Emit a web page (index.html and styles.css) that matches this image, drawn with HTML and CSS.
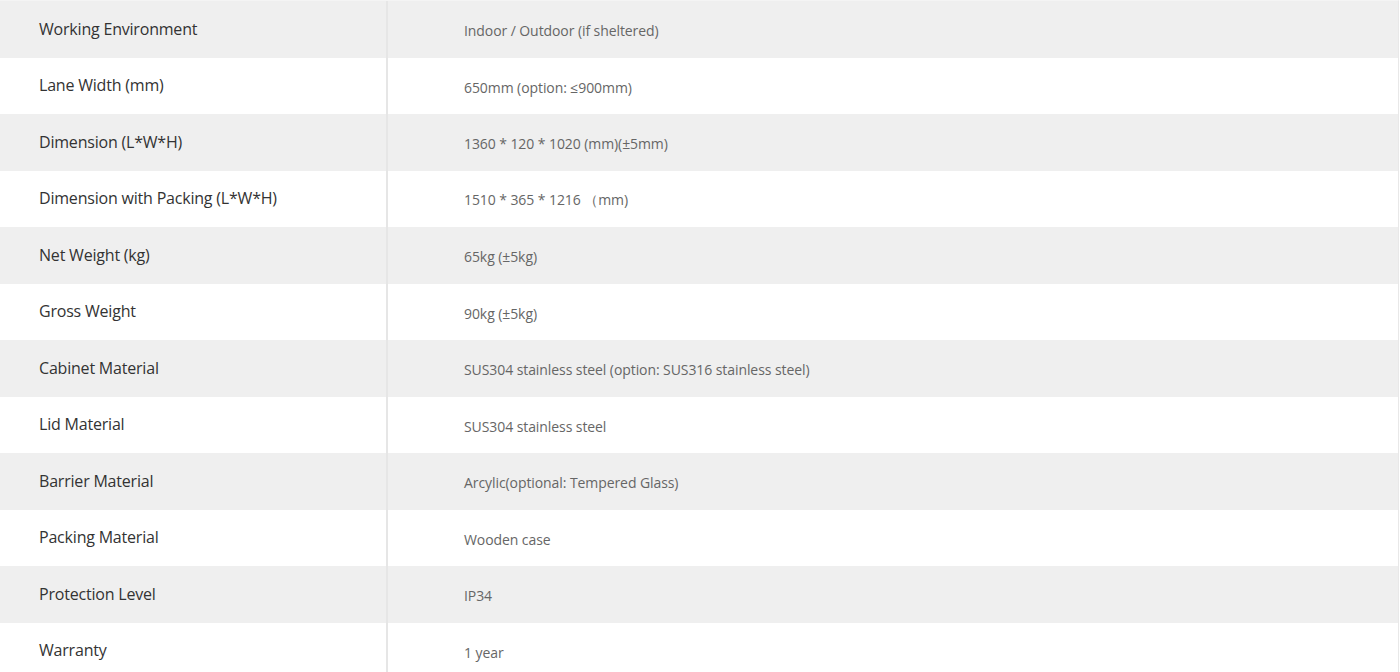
FILE: index.html
```html
<!DOCTYPE html>
<html lang="en">
<head>
<meta charset="utf-8">
<title>Specifications</title>
<link rel="stylesheet" href="styles.css">
</head>
<body>
<div class="spec">
  <div class="row alt"><div class="label">Working Environment</div><div class="value">Indoor / Outdoor (if sheltered)</div></div>
  <div class="row"><div class="label">Lane Width (mm)</div><div class="value">650mm (option: ≤900mm)</div></div>
  <div class="row alt"><div class="label">Dimension (L*W*H)</div><div class="value">1360 * 120 * 1020 (mm)(±5mm)</div></div>
  <div class="row"><div class="label">Dimension with Packing (L*W*H)</div><div class="value">1510 * 365 * 1216 （mm)</div></div>
  <div class="row alt"><div class="label">Net Weight (kg)</div><div class="value">65kg (±5kg)</div></div>
  <div class="row"><div class="label">Gross Weight</div><div class="value">90kg (±5kg)</div></div>
  <div class="row alt"><div class="label">Cabinet Material</div><div class="value">SUS304 stainless steel (option: SUS316 stainless steel)</div></div>
  <div class="row"><div class="label">Lid Material</div><div class="value">SUS304 stainless steel</div></div>
  <div class="row alt"><div class="label">Barrier Material</div><div class="value">Arcylic(optional: Tempered Glass)</div></div>
  <div class="row"><div class="label">Packing Material</div><div class="value">Wooden case</div></div>
  <div class="row alt"><div class="label">Protection Level</div><div class="value">IP34</div></div>
  <div class="row"><div class="label">Warranty</div><div class="value">1 year</div></div>
</div>
</body>
</html>
```
FILE: styles.css
```css
html, body {
  margin: 0;
  padding: 0;
  background: #ffffff;
}
body {
  font-family: "Open Sans", "Noto Sans", sans-serif;
  overflow: hidden;
}
.spec {
  width: 1398px;
  border-right: 1px solid #e8e8e8;
  border-top: 1px solid #f4f4f4;
}
.row {
  display: grid;
  grid-template-columns: 388px 1fr;
  height: 56.5px;
  background: #ffffff;
}
.row.alt {
  background: #efefef;
}
.label {
  display: flex;
  align-items: center;
  padding-left: 39px;
  padding-bottom: 1px;
  font-size: 16px;
  letter-spacing: -0.2px;
  color: #333333;
  border-right: 2px solid #e6e6e6;
}
.value {
  display: flex;
  align-items: center;
  padding-left: 76px;
  padding-top: 3px;
  font-size: 14px;
  letter-spacing: -0.08px;
  color: #666666;
}
```
